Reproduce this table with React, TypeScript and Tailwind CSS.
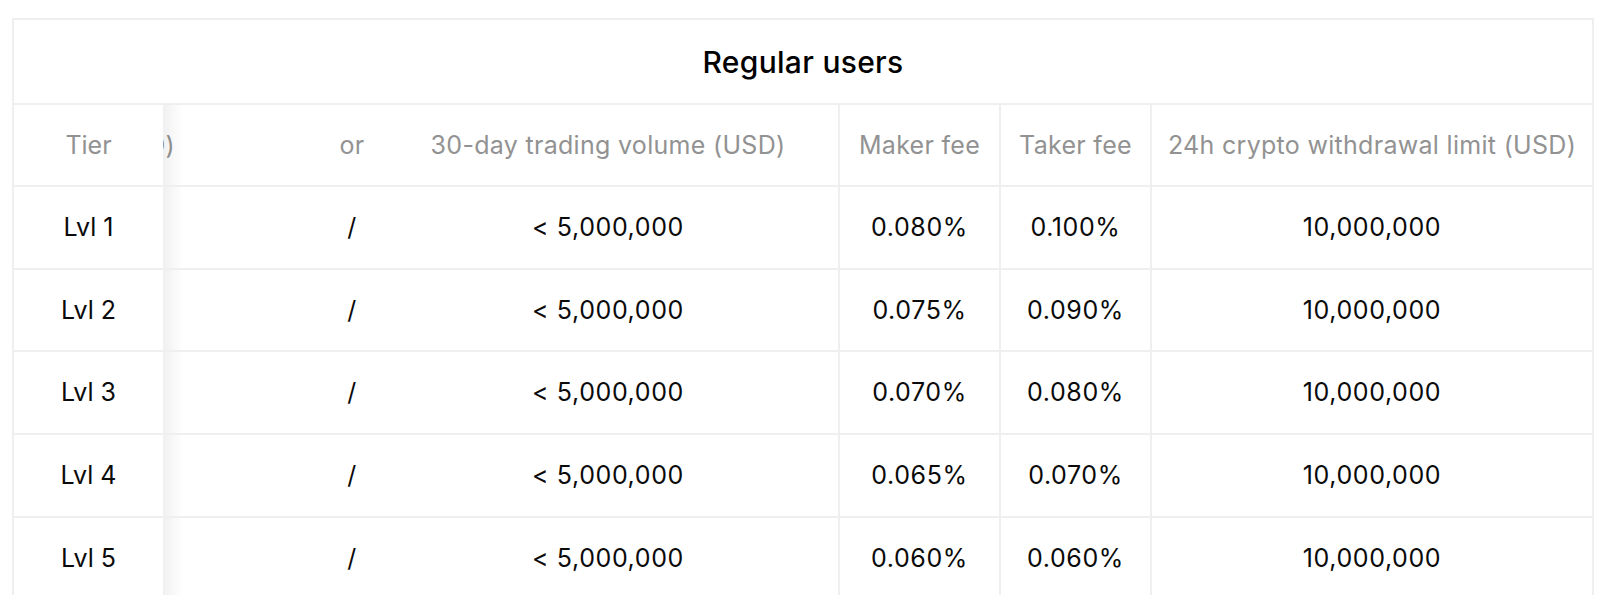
import React from "react";

const rows = [
  { tier: "Lvl 1", maker: "0.080%", taker: "0.100%" },
  { tier: "Lvl 2", maker: "0.075%", taker: "0.090%" },
  { tier: "Lvl 3", maker: "0.070%", taker: "0.080%" },
  { tier: "Lvl 4", maker: "0.065%", taker: "0.070%" },
  { tier: "Lvl 5", maker: "0.060%", taker: "0.060%" },
];

function Row({
  header,
  tier,
  assets,
  or,
  volume,
  maker,
  taker,
  limit,
}: {
  header?: boolean;
  tier: string;
  assets?: string;
  or: string;
  volume: string;
  maker: string;
  taker: string;
  limit: string;
}) {
  const tone = header
    ? "text-[#929292] tracking-[0.3px]"
    : "text-[#0a0a0a] tracking-[0.6px]";
  return (
    <div
      className={`flex border-b-2 border-[#efefef] ${header ? "h-[82px]" : "h-[82.7px]"} ${tone}`}
    >
      <div className="relative z-10 flex w-[149px] shrink-0 items-center justify-center bg-white tracking-normal after:absolute after:left-full after:top-0 after:bottom-0 after:w-[20px] after:bg-linear-to-r after:from-[rgba(0,0,0,0.06)] after:to-transparent after:content-['']">
        {tier}
      </div>
      <div className="flex w-[163px] shrink-0 items-center overflow-hidden">
        <div className="flex w-[12px] shrink-0 justify-end">
          <span className="whitespace-nowrap">{assets ?? ""}</span>
        </div>
      </div>
      <div className="flex w-[52px] shrink-0 items-center justify-center">{or}</div>
      <div className="flex w-[460px] shrink-0 items-center justify-center">{volume}</div>
      <div className="flex w-[161px] shrink-0 items-center justify-center border-l-2 border-[#efefef]">
        {maker}
      </div>
      <div className="flex w-[151px] shrink-0 items-center justify-center border-l-2 border-[#efefef]">
        {taker}
      </div>
      <div className="flex flex-1 items-center justify-center border-l-2 border-[#efefef]">
        {limit}
      </div>
    </div>
  );
}

export default function App() {
  return (
    <div className="h-[595px] overflow-hidden bg-white pl-[12px] pt-[18px] font-['Inter',sans-serif] text-[25px] leading-none">
      <div className="w-[1582px] border-2 border-[#efefef]">
        <div className="flex h-[85px] items-center justify-center border-b-2 border-[#efefef] text-[30px] font-medium tracking-[0.3px] text-black">
          Regular users
        </div>
        <Row
          header
          tier="Tier"
          assets="Assets (USD)"
          or="or"
          volume="30-day trading volume (USD)"
          maker="Maker fee"
          taker="Taker fee"
          limit="24h crypto withdrawal limit (USD)"
        />
        {rows.map((r) => (
          <Row
            key={r.tier}
            tier={r.tier}
            or="/"
            volume="< 5,000,000"
            maker={r.maker}
            taker={r.taker}
            limit="10,000,000"
          />
        ))}
      </div>
    </div>
  );
}
